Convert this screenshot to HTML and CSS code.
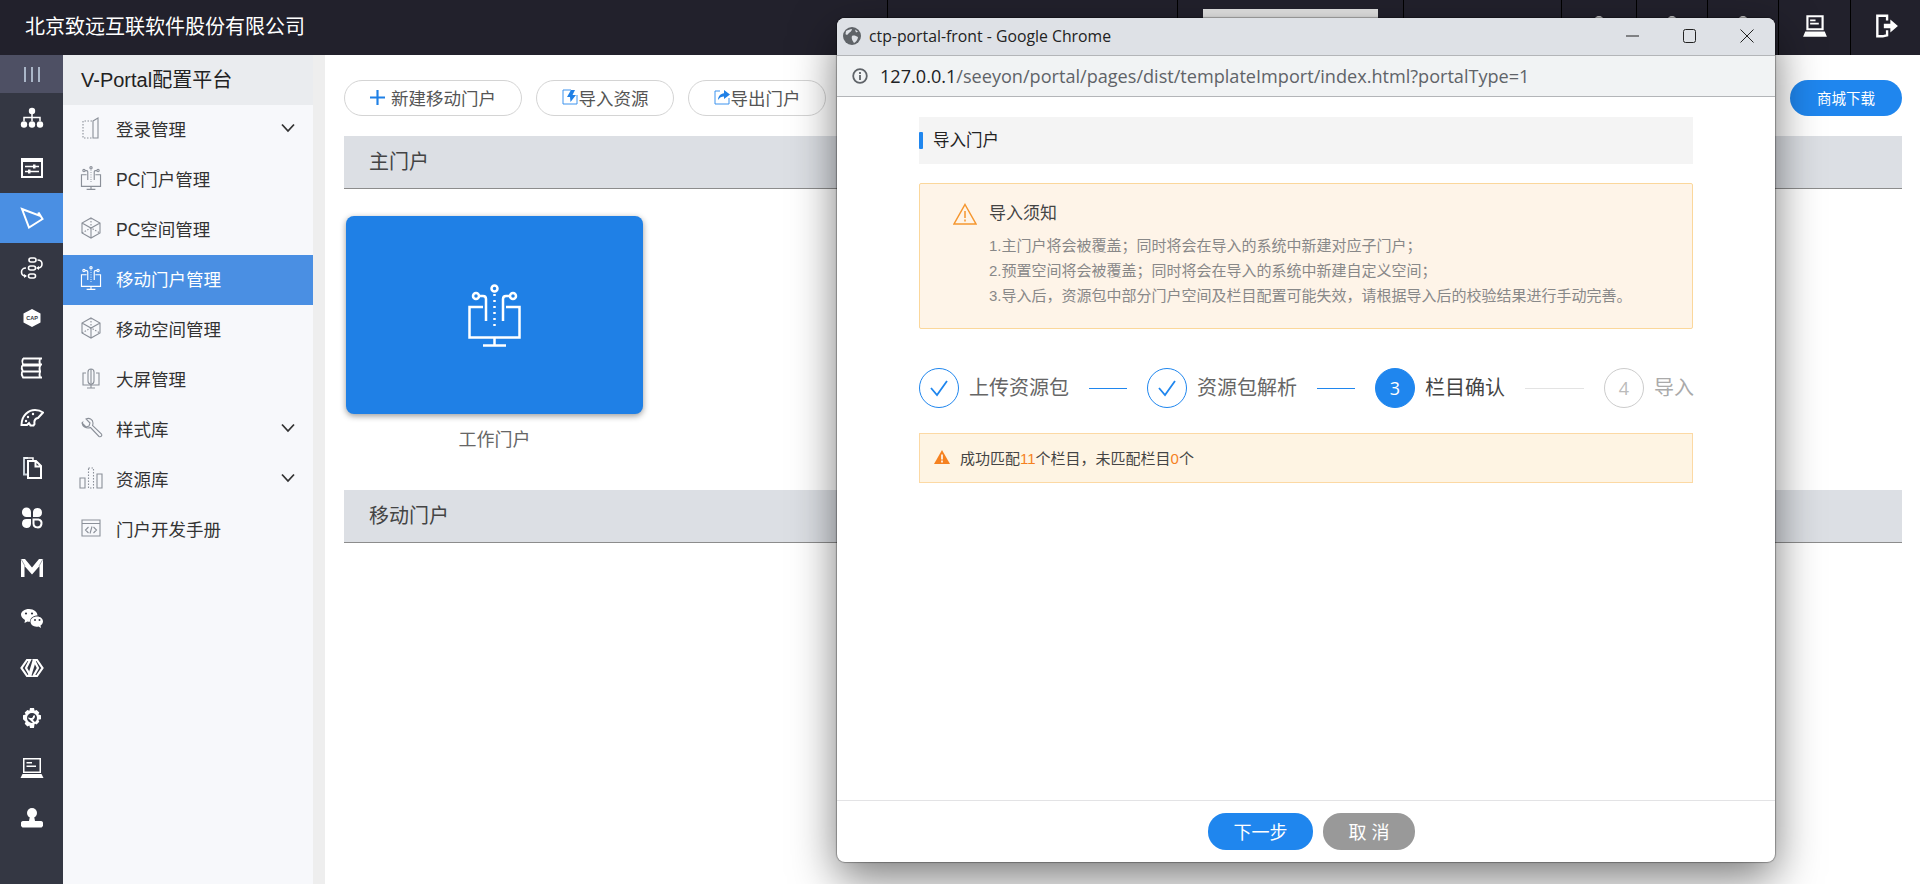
FILE: index.html
```html
<!DOCTYPE html>
<html lang="zh-CN">
<head>
    <meta charset="UTF-8">
    <title>V-Portal配置平台</title>
    <link rel="stylesheet" href="styles.css">
</head>
<body>
    <svg class="defs" xmlns="http://www.w3.org/2000/svg">
        <symbol id="i-portal" viewBox="0 0 53 63">
            <circle cx="26.5" cy="4.5" r="3"/><circle cx="8" cy="12" r="3"/><circle cx="45" cy="12" r="3"/>
            <path d="M11 12h4q3 0 3 3v22M42 12h-4q-3 0-3 3v22M15 23H1.5v30.500h50V23H38M26.500 53.500V61M15 61.500h23"/>
            <path d="M26.500 10V46" stroke-dasharray="2 4"/>
        </symbol>
        <symbol id="i-cube" viewBox="0 0 24 24">
            <path d="M12 2l9 5v10l-9 5-9-5V7zM3 7l9 5 9-5M12 12v10"/>
            <path d="M12 2v10M3 17l9-5 9 5" stroke-dasharray="1.500 1.500"/>
        </symbol>
        <symbol id="i-chev" viewBox="0 0 16 10">
            <path d="M2 1.500l6 6.500 6-6.500"/>
        </symbol>
    </svg>

    <!-- top bar -->
    <header class="topbar">
        <div class="brand">北京致远互联软件股份有限公司</div>
        <div class="top-cells">
            <div class="cell cell-1"></div>
            <div class="cell cell-2"><span class="top-tab"></span></div>
            <div class="cell cell-3"></div>
            <div class="cell cell-4"><span class="top-dot"></span></div>
            <div class="cell cell-5"><span class="top-dot"></span></div>
            <div class="cell cell-5"><span class="top-dot"></span></div>
            <div class="cell cell-6">
                <svg class="top-icon" viewBox="0 0 24 24"><path fill="#fff" d="M4 2h16v14H4zM6 4v10h12V4zM7.500 6h5v1.500h-5zM7.500 9h8v1.500h-8zM3 17h18l2 5H1z" fill-rule="evenodd"/></svg>
            </div>
            <div class="cell cell-7">
                <svg class="top-icon" viewBox="0 0 24 24"><path fill="none" stroke="#fff" stroke-width="2.200" d="M13 7V2.500H4v19l5 0 4-1V16"/><path fill="#fff" d="M10 10h6V6l7 6-7 6v-4h-6z"/></svg>
            </div>
        </div>
    </header>

    <div class="layout">
        <!-- icon rail -->
        <nav class="rail">
            <div class="rail-toggle"><span></span><span></span><span></span></div>
            <a class="rail-item"><svg viewBox="0 0 24 24"><g fill="#fff"><circle cx="12" cy="5" r="3.200"/><circle cx="4" cy="18.500" r="3.200"/><circle cx="12" cy="18.500" r="3.200"/><circle cx="20" cy="18.500" r="3.200"/></g><path fill="none" stroke="#fff" stroke-width="1.500" d="M12 7v8M4 15v-3.500h16V15"/></svg></a>
            <a class="rail-item"><svg viewBox="0 0 24 24"><path fill="#fff" fill-rule="evenodd" d="M1 2h22v20H1zM3 6v14h18V6z"/><path fill="none" stroke="#fff" stroke-width="1.600" d="M5 10.500h14M5 15.500h14"/><path fill="#fff" d="M13 8.500h2.500v4H13zM8 13.500h2.500v4H8z"/></svg></a>
            <a class="rail-item rail-active"><svg viewBox="0 0 24 24"><path fill="none" stroke="#fff" stroke-width="2" stroke-linejoin="miter" d="M2 3l17 6.500-.5-3 4 6.500L9 21.500z"/></svg></a>
            <a class="rail-item"><svg viewBox="0 0 24 24"><g fill="none" stroke="#fff" stroke-width="1.600"><rect x="9" y="2" width="7" height="4" rx="2"/><rect x="8.500" y="10" width="7" height="4" rx="2"/><rect x="8.500" y="18" width="7" height="4" rx="2"/><path d="M17.500 4c6 0 6 8 0 8M6 12c-6 0-6 8 0 8"/></g><path fill="#fff" d="M19 10l-3 2 3 2zM4 18l3 2-3 2z"/></svg></a>
            <a class="rail-item"><svg viewBox="0 0 24 24"><path fill="#fff" d="M12 3l8.500 4.500v9L12 21l-8.500-4.500v-9z"/><text class="cap-text" x="12" y="14.300" text-anchor="middle">CAP</text></svg></a>
            <a class="rail-item"><svg viewBox="0 0 24 24"><path fill="none" stroke="#fff" stroke-width="1.800" d="M3 2.500h19M3 2.500q-1.500 3 0 6h19M20 2.500q-1 3 0 6M2 9.500h19M2 9.500q-1 3 1 6h18M2 15.500q-1 3 1 6h19M20 15.500q-1 3 0 6M20 9.500q-1 3 0 6"/></svg></a>
            <a class="rail-item"><svg viewBox="0 0 24 24"><path fill="none" stroke="#fff" stroke-width="2" d="M1.500 19C1.500 9 9 4 15 4c3.500 0 6 1 8 2.500L18 12c-3 .5-4 3-3.500 6l-1 1.500-3 0L9 17l-2 2z"/><g fill="#fff"><circle cx="8" cy="11" r="1.200"/><circle cx="13" cy="8" r="1.200"/><circle cx="6" cy="15" r="1.200"/></g></svg></a>
            <a class="rail-item"><svg viewBox="0 0 24 24"><path fill="none" stroke="#fff" stroke-width="2" d="M8 5h8l5 5v12H8zM15.500 5v5.500H21"/><path fill="none" stroke="#c7d0d8" stroke-width="2" d="M8 2h-4v16.500h3"/><path fill="none" stroke="#fff" stroke-width="1.500" d="M4 2h9v2"/></svg></a>
            <a class="rail-item"><svg viewBox="0 0 24 24"><g fill="#fff"><path d="M2 6a4.500 4.500 0 0 1 9 0v5H6a4.500 4.500 0 0 1-4-5zM13 6a4.500 4.500 0 1 1 5 5h-5zM11 13v5a4.500 4.500 0 1 1-4.500-5z"/></g><path fill="none" stroke="#fff" stroke-width="2" d="M13.500 13.500h5a4 4 0 1 1-5 4z"/></svg></a>
            <a class="rail-item"><svg viewBox="0 0 24 24"><path fill="#fff" d="M1 3h4l7 8.500L19 3h4v18h-3.500V10L12 18.500 4.500 10v11H1z"/><path fill="none" stroke="#888d96" stroke-width=".8" d="M5 10l-4-7M19 10l4-7"/></svg></a>
            <a class="rail-item"><svg viewBox="0 0 24 24"><path fill="#fff" d="M9 3c5 0 8.500 3 8.500 6.500-4 0-7.500 2.500-7.500 6-.5.500-1.500.3-2.500 0L4.500 17l.5-3C2.500 12.500 1 10.500 1 8.500 1 5.500 4.500 3 9 3z"/><path fill="#fff" d="M17 10.500c3.500 0 6 2.300 6 5 0 1.500-1 3-2.500 4l.5 2.500-2.500-1.500c-4.500 1-8-1.500-8-5 0-2.800 3-5 6.500-5z"/><g fill="#343743"><circle cx="6" cy="7.500" r="1.100"/><circle cx="12" cy="7.500" r="1.100"/><circle cx="15" cy="14" r="1"/><circle cx="19.500" cy="14" r="1"/></g></svg></a>
            <a class="rail-item"><svg viewBox="0 0 24 24"><path fill="none" stroke="#fff" stroke-width="2.200" d="M7 4L1.500 12 7 20h3.500L6 12l4-8zM17 4l5.500 8-5.500 8h-3.500L18 12l-4-8z"/><path fill="#fff" d="M13 3h3.500L11 21H7.500z"/></svg></a>
            <a class="rail-item"><svg viewBox="0 0 24 24"><path fill="#fff" fill-rule="evenodd" d="M10 2h4l.6 2.800 2-.9 2.700 2.700-1 2 2.700.6v4l-2.700.6 1 2-2.700 2.700-2-1L14 22h-4l-.6-2.500-2 1-2.700-2.700 1-2L3 13.200v-4l2.700-.6-1-2 2.700-2.700 2 .9zM12 7a5 5 0 1 0 0 10 5 5 0 0 0 0-10z"/><path fill="none" stroke="#fff" stroke-width="2" d="M14 9.500a3 3 0 0 1-3.500 3.500L15 17.500"/></svg></a>
            <a class="rail-item"><svg viewBox="0 0 24 24"><path fill="#fff" fill-rule="evenodd" d="M3 2h18v15H3zM4.500 3.500v12h15v-12zM6.500 6H12v1.500H6.500zM6.500 9.500H16V11H6.500zM2.500 18h19l2 4H.5z"/></svg></a>
            <a class="rail-item"><svg viewBox="0 0 24 24"><circle fill="#fff" cx="12" cy="7" r="5"/><path fill="#fff" d="M10 10h4l1 5h6c1.500 0 2 1 2 2v3l-1.500 1.500h-19L1 20v-3c0-1 .5-2 2-2h6z"/></svg></a>
        </nav>

        <!-- menu -->
        <aside class="menu">
            <div class="menu-title">V-Portal配置平台</div>
            <a class="menu-item"><svg viewBox="0 0 24 24"><path d="M14 5l5-3v20h-5zM14 5v17"/><path d="M13 5H4v17h10" stroke-dasharray="1.500 1.500"/></svg>登录管理<svg class="chev"><use href="#i-chev"/></svg></a>
            <a class="menu-item"><svg><use href="#i-portal"/></svg>PC门户管理</a>
            <a class="menu-item"><svg><use href="#i-cube"/></svg>PC空间管理</a>
            <a class="menu-item menu-active"><svg><use href="#i-portal"/></svg>移动门户管理</a>
            <a class="menu-item"><svg><use href="#i-cube"/></svg>移动空间管理</a>
            <a class="menu-item"><svg viewBox="0 0 24 24"><path d="M9 6a3 3 0 0 1 6 0v9a3 3 0 0 1-6 0zM12 3v14M7 7H4v12h16V7h-3M12 19v3M8 22h8"/></svg>大屏管理</a>
            <a class="menu-item"><svg viewBox="0 0 24 24"><path d="M3 7l4 4 3-1 1-3-4-4c3-1.500 7 0 7 4 0 1 0 1.500-.5 2.500l9 8.500c1 1.500-.5 3.500-2.500 2.500l-8.500-9c-4 1.500-9-1-8-5z"/></svg>样式库<svg class="chev"><use href="#i-chev"/></svg></a>
            <a class="menu-item"><svg viewBox="0 0 24 24"><path d="M1 12h5v10H1zM18 8h5v14h-5z"/><path d="M9.500 2h5v20h-5z" stroke-dasharray="1.500 1.500"/></svg>资源库<svg class="chev"><use href="#i-chev"/></svg></a>
            <a class="menu-item"><svg viewBox="0 0 24 24"><path d="M3 4h18v16H3zM3 7.500h18M9.500 11l-3 3 3 3M14.500 11l3 3-3 3M13 10.500l-2 7"/></svg>门户开发手册</a>
        </aside>
        <div class="menu-gutter"></div>

        <!-- main list -->
        <main class="content">
            <div class="toolbar">
                <button class="pill pill-new"><svg class="plus" viewBox="0 0 14 14"><path d="M7 0v14M0 7h14"/></svg>新建移动门户</button>
                <button class="pill pill-in"><svg class="pill-icon" viewBox="0 0 16 16"><path class="blue-line" d="M9 1H1v14h14V6"/><path class="blue-fill" d="M9 1h4L10.500 6H14l-5.500 7L8 8H5z"/></svg>导入资源</button>
                <button class="pill pill-out"><svg class="pill-icon" viewBox="0 0 16 16"><path class="blue-line" d="M6 2H1v13h14V9"/><path class="blue-fill" d="M10 1l6 4.500-6 4.500V7.500C7.500 7.500 5.500 8.500 4 11c.3-4 2.500-6.500 6-6.800z"/></svg>导出门户</button>
                <button class="shop-btn">商城下载</button>
            </div>
            <h3 class="group-bar">主门户</h3>
            <div class="portal-card">
                <div class="card-face"><svg class="card-icon"><use href="#i-portal"/></svg></div>
                <div class="card-name">工作门户</div>
            </div>
            <h3 class="group-bar">移动门户</h3>
        </main>
    </div>

    <!-- chrome popup -->
    <section class="popup">
        <div class="popup-title">
            <svg class="globe" viewBox="0 0 18 18"><circle cx="9" cy="9" r="9" fill="#5f6368"/><path fill="#dee1e6" d="M3 4c2-1 4-2 6-2 0 2-2 3-3 4s-2 3-3.500 1zM9 9c2-1 4 0 6 1 0 2-2 5-4 6-1-2-3-4-2-7zM12 2.500l3 2-2 1z"/></svg>
            <span class="popup-name">ctp-portal-front - Google Chrome</span>
            <span class="win-btn"><svg viewBox="0 0 14 14"><path d="M0 7h13"/></svg></span>
            <span class="win-btn"><svg viewBox="0 0 14 14"><rect x=".5" y=".5" width="12" height="13" rx="2"/></svg></span>
            <span class="win-btn"><svg viewBox="0 0 14 14"><path d="M.5.500l13 13M13.500.500l-13 13"/></svg></span>
        </div>
        <div class="popup-addr">
            <svg class="info" viewBox="0 0 16 16"><circle cx="8" cy="8" r="6.800"/><path d="M8 7v5M8 4v2"/></svg>
            <span class="url"><b>127.0.0.1</b>/seeyon/portal/pages/dist/templateImport/index.html?portalType=1</span>
        </div>
        <div class="popup-body">
            <div class="sec-head">导入门户</div>
            <div class="notice">
                <div class="notice-title">
                    <svg class="warn" viewBox="0 0 24 22"><path d="M12 1.500L23 21H1z"/><path d="M12 8v7M12 16.500v2"/></svg>
                    导入须知
                </div>
                <p>1.主门户将会被覆盖；同时将会在导入的系统中新建对应子门户；</p>
                <p>2.预置空间将会被覆盖；同时将会在导入的系统中新建自定义空间；</p>
                <p>3.导入后，资源包中部分门户空间及栏目配置可能失效，请根据导入后的校验结果进行手动完善。</p>
            </div>
            <div class="steps">
                <div class="step done"><i class="dot"><svg viewBox="0 0 20 20"><path d="M2 10l6 7L18 3"/></svg></i><span>上传资源包</span></div>
                <div class="step-line"></div>
                <div class="step done"><i class="dot"><svg viewBox="0 0 20 20"><path d="M2 10l6 7L18 3"/></svg></i><span>资源包解析</span></div>
                <div class="step-line"></div>
                <div class="step now"><i class="dot">3</i><span>栏目确认</span></div>
                <div class="step-line step-line-off"></div>
                <div class="step todo"><i class="dot">4</i><span>导入</span></div>
            </div>
            <div class="result">
                <svg class="result-icon" viewBox="0 0 16 14"><path fill="#f5811f" d="M8 0l8 14H0z"/><path stroke="#fff" stroke-width="1.600" d="M8 4.500v5M8 10.500v2"/></svg>
                <span>成功匹配<em>11</em>个栏目，未匹配栏目<em>0</em>个</span>
            </div>
        </div>
        <div class="popup-foot">
            <button class="foot-btn foot-next">下一步</button>
            <button class="foot-btn foot-cancel">取 消</button>
        </div>
    </section>
</body>
</html>
```

FILE: styles.css
```css
* { margin: 0; padding: 0; box-sizing: border-box; }
html, body { height: 100%; }
body {
    font-family: "Liberation Sans", "Noto Sans CJK SC", sans-serif;
    color: #333;
    background-color: #fff;
    overflow: hidden;
}
.defs { display: none; }

/* top bar */
.topbar {
    height: 55px;
    display: flex;
    justify-content: space-between;
    background-color: #22212c;
}
.brand {
    padding-left: 25px;
    font-size: 20px;
    line-height: 54px;
    color: #fff;
}
.top-cells { display: flex; }
.cell {
    border-left: 1px solid #000;
    display: flex;
    align-items: center;
    justify-content: center;
}
.cell-1 { width: 290px; }
.cell-2 { width: 226px; padding: 0 25px; align-items: flex-start; }
.cell-3 { width: 158px; }
.cell-4 { width: 75px; align-items: flex-start; }
.cell-5 { width: 71px; align-items: flex-start; }
.cell-6 { width: 72px; padding-bottom: 3px; }
.cell-7 { width: 70px; padding-bottom: 3px; }
.top-tab {
    display: block;
    width: 100%;
    height: 30px;
    margin-top: 9px;
    background-color: #e6e6e6;
}
.top-dot {
    width: 10px;
    height: 10px;
    margin-top: 16px;
    background-color: #cfcfcf;
    border-radius: 50%;
}
.top-icon { width: 26px; height: 26px; }

/* page */
.layout {
    display: flex;
    height: calc(100% - 55px);
}
.rail {
    width: 63px;
    flex: none;
    background-color: #343743;
}
.rail-toggle {
    height: 38px;
    display: flex;
    justify-content: center;
    align-items: center;
    gap: 5px;
    background-color: #4e5064;
}
.rail-toggle span {
    width: 2px;
    height: 15px;
    background-color: #aab6c8;
}
.rail-item {
    height: 50px;
    display: flex;
    justify-content: center;
    align-items: center;
}
.rail-item svg { width: 24px; height: 24px; }
.rail-active { background-color: #4a8fe3; }
.cap-text {
    font-family: "Liberation Sans", sans-serif;
    font-size: 5.500px;
    font-weight: bold;
    fill: #343743;
}

.menu {
    width: 250px;
    flex: none;
    background-color: #f7f8fb;
}
.menu-gutter {
    width: 12px;
    flex: none;
    background-color: #eeeeee;
}
.menu-title {
    height: 50px;
    padding-left: 18px;
    font-size: 20px;
    line-height: 51px;
    color: #222;
    background-color: #eaecef;
}
.menu-item {
    height: 50px;
    display: flex;
    align-items: center;
    gap: 13px;
    padding: 0 17px 4px 16px;
    font-size: 17.500px;
    color: #333;
}
.menu-item svg {
    width: 24px;
    height: 24px;
    fill: none;
    stroke: #8b9099;
    stroke-width: 1.100;
}
.menu-item svg use[href="#i-portal"] { stroke-width: 3; }
.menu-item .chev {
    width: 16px;
    height: 10px;
    margin-left: auto;
    stroke: #333;
    stroke-width: 1.800;
}
.menu-active {
    color: #fff;
    background-color: #4a8fe3;
}
.menu-active svg { stroke: #fff; }

/* list */
.content {
    flex: 1;
    padding: 25px 18px 0 19px;
    background-color: #fff;
}
.toolbar {
    display: flex;
    gap: 14px;
    margin-bottom: 20px;
}
.pill {
    height: 36px;
    display: flex;
    align-items: center;
    justify-content: center;
    padding-bottom: 2px;
    font-family: inherit;
    font-size: 17.500px;
    color: #555;
    background-color: #fff;
    border: 1px solid #d4d4d4;
    border-radius: 18px;
}
.pill-new { width: 178px; gap: 6px; }
.pill-in, .pill-out { width: 138px; gap: 1px; }
.plus {
    width: 15px;
    height: 15px;
    fill: none;
    stroke: #1f80e6;
    stroke-width: 2;
}
.pill-icon { width: 16px; height: 16px; }
.blue-line { fill: none; stroke: #3d93ee; stroke-width: 1; }
.blue-fill { fill: #1f80e6; }
.shop-btn {
    width: 112px;
    height: 36px;
    margin-left: auto;
    padding-bottom: 2px;
    font-family: inherit;
    font-size: 14.500px;
    color: #fff;
    background-color: #1f86ee;
    border: none;
    border-radius: 18px;
}
.group-bar {
    height: 53px;
    padding-left: 25px;
    font-size: 20px;
    font-weight: normal;
    line-height: 52px;
    color: #444;
    background-color: #dcdfe4;
    border-bottom: 1px solid #8c8c8c;
}
.portal-card {
    width: 297px;
    margin: 27px 0 38px 2px;
}
.card-face {
    height: 198px;
    display: flex;
    align-items: center;
    justify-content: center;
    background-color: #1f80e6;
    border-radius: 8px;
    box-shadow: 0 2px 6px rgba(0, 0, 0, 0.4);
}
.card-icon {
    width: 53px;
    height: 63px;
    fill: none;
    stroke: #fff;
    stroke-width: 2.500;
}
.card-name {
    margin-top: 14px;
    font-size: 18px;
    line-height: 24px;
    text-align: center;
    color: #666;
}

/* popup window */
.popup {
    position: absolute;
    left: 837px;
    top: 18px;
    width: 938px;
    height: 844px;
    display: flex;
    flex-direction: column;
    background-color: #fff;
    border-radius: 8px;
    box-shadow: 0 16px 45px rgba(0, 0, 0, 0.52), 0 0 1px 1px rgba(0, 0, 0, 0.3);
    overflow: hidden;
}
.popup-title {
    height: 38px;
    flex: none;
    display: flex;
    align-items: center;
    padding: 0 0 2px 6px;
    background-color: #dee1e6;
    border-bottom: 1px solid #b3b5b8;
}
.globe { width: 18px; height: 18px; margin-right: 8px; }
.popup-name {
    margin-right: auto;
    font-family: "Open Sans", sans-serif;
    font-size: 15.800px;
    color: #222;
}
.win-btn {
    width: 57px;
    display: flex;
    justify-content: center;
}
.win-btn svg {
    width: 14px;
    height: 14px;
    fill: none;
    stroke: #222;
    stroke-width: 1;
}
.popup-addr {
    height: 41px;
    flex: none;
    display: flex;
    align-items: center;
    padding-left: 15px;
    background-color: #f1f3f4;
    border-bottom: 1px solid #b3b5b8;
}
.info {
    width: 16px;
    height: 16px;
    margin-right: 12px;
    fill: none;
    stroke: #5f6368;
    stroke-width: 1.800;
}
.url {
    font-family: "Open Sans", sans-serif;
    font-size: 18.100px;
    color: #5f6368;
}
.url b { font-weight: normal; color: #202124; }
.popup-body {
    flex: 1;
    padding: 20px 82px 0;
}
.sec-head {
    position: relative;
    height: 47px;
    padding-left: 14px;
    font-size: 16.500px;
    line-height: 47px;
    color: #222;
    background-color: #f4f4f4;
}
.sec-head::before {
    content: "";
    position: absolute;
    left: 0;
    top: 15px;
    width: 4px;
    height: 17px;
    background-color: #1f86ee;
    border-radius: 1px;
}
.notice {
    height: 146px;
    margin-top: 19px;
    padding: 18px 0 0 69px;
    font-size: 15px;
    line-height: 25px;
    color: #888;
    background-color: #fef4e8;
    border: 1px solid #fbd79b;
    border-radius: 2px;
}
.notice-title {
    position: relative;
    margin-bottom: 7px;
    font-size: 17px;
    line-height: 24px;
    color: #444;
}
.warn {
    position: absolute;
    left: -36px;
    top: 1px;
    width: 24px;
    height: 22px;
    fill: none;
    stroke: #f5962f;
    stroke-width: 1.500;
}
.steps {
    height: 40px;
    margin-top: 39px;
    display: flex;
    align-items: center;
    font-size: 20px;
    color: #666;
}
.step {
    display: flex;
    align-items: center;
    flex: none;
}
.step span { margin-top: -3px; }
.dot {
    width: 40px;
    height: 40px;
    margin-right: 10px;
    display: flex;
    align-items: center;
    justify-content: center;
    font-style: normal;
    font-family: "Open Sans", sans-serif;
    font-size: 18px;
    border: 1px solid #1f86ee;
    border-radius: 50%;
}
.dot svg {
    width: 20px;
    height: 20px;
    fill: none;
    stroke: #1f86ee;
    stroke-width: 1.800;
}
.now { color: #444; }
.now .dot {
    color: #fff;
    background-color: #1f86ee;
}
.todo { color: #aaa; }
.todo .dot {
    color: #bbb;
    border-color: #ccc;
}
.step-line {
    width: 38px;
    flex: none;
    height: 1px;
    margin: 0 20px;
    background-color: #1f86ee;
}
.step-line-off { width: 59px; background-color: #e3e3e3; }
.result {
    height: 50px;
    margin-top: 25px;
    display: flex;
    align-items: center;
    gap: 10px;
    padding: 0 0 2px 14px;
    font-size: 15px;
    color: #444;
    background-color: #fef4e3;
    border: 1px solid #fcd9a4;
}
.result-icon { width: 16px; height: 14px; }
.result em {
    font-style: normal;
    color: #f5811f;
}
.popup-foot {
    height: 62px;
    flex: none;
    display: flex;
    justify-content: center;
    gap: 10px;
    padding: 12px 0 0 11px;
    border-top: 1px solid #e3e3e5;
}
.foot-btn {
    height: 37px;
    padding-bottom: 2px;
    font-family: inherit;
    font-size: 18px;
    color: #fff;
    border: none;
    border-radius: 18px;
}
.foot-next { width: 105px; background-color: #1f86ee; }
.foot-cancel { width: 92px; background-color: #999; }
```
